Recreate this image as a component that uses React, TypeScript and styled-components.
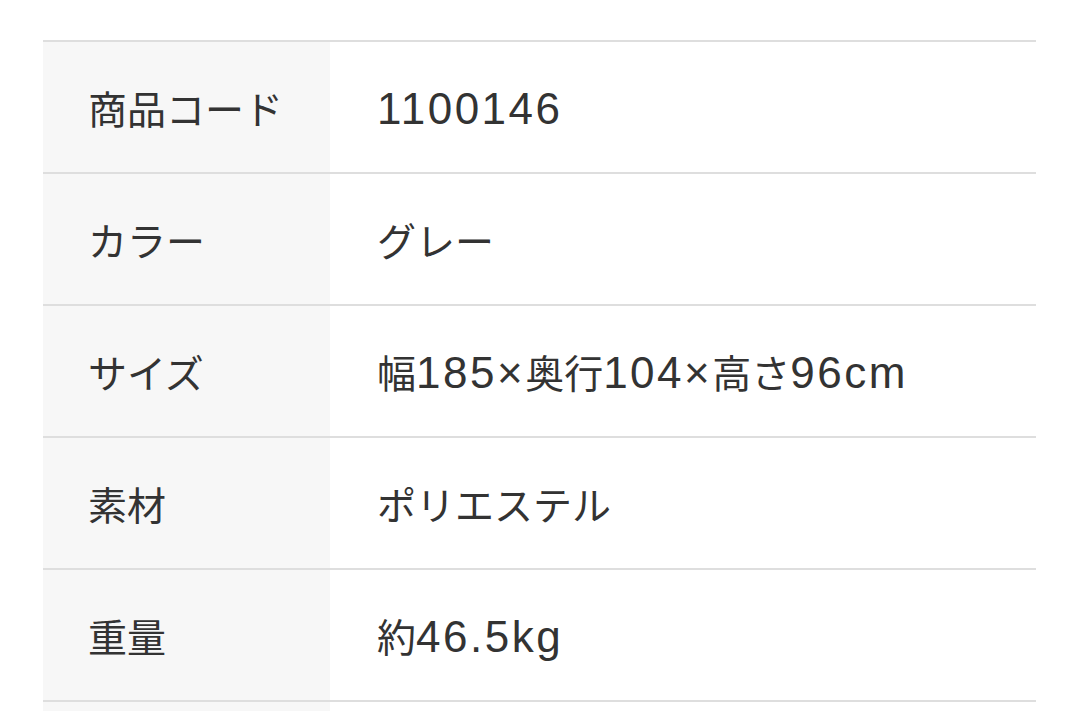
import React from "react";
import styled, { createGlobalStyle } from "styled-components";

const Global = createGlobalStyle`
  html, body { margin: 0; padding: 0; background: #ffffff; }
  body { font-family: "Noto Sans CJK JP", "Noto Sans", sans-serif; }
`;

const Page = styled.div`
  padding: 40px 44px 0 43px;
  height: 711px;
  box-sizing: border-box;
  overflow: hidden;
`;

const Table = styled.div`
  display: flex;
  flex-direction: column;
  border-top: 2px solid #dedede;
`;

const Row = styled.div`
  display: grid;
  grid-template-columns: 287px 1fr;
  height: 130px;
  border-bottom: 2px solid #dedede;
`;

const Label = styled.div`
  background: #f7f7f7;
  display: flex;
  align-items: center;
  padding-left: 45px;
  font-size: 39px;
  color: #333333;
`;

const Value = styled.div`
  display: flex;
  align-items: center;
  padding-left: 47px;
  font-size: 39px;
  color: #333333;
  white-space: pre;
`;

const Latin = styled.span`
  font-family: "Liberation Sans", Arial, sans-serif;
  font-size: 44px;
  letter-spacing: 2.5px;
`;

function Mixed({ text }: { text: string }) {
  const parts = text.split(/([0-9A-Za-z.×]+)/).filter((p) => p !== "");
  return (
    <span>
      {parts.map((p, i) =>
        /^[0-9A-Za-z.×]+$/.test(p) ? <Latin key={i}>{p}</Latin> : <React.Fragment key={i}>{p}</React.Fragment>
      )}
    </span>
  );
}

const rows: [string, string][] = [
  ["商品コード", "1100146"],
  ["カラー", "グレー"],
  ["サイズ", "幅185×奥行104×高さ96cm"],
  ["素材", "ポリエステル"],
  ["重量", "約46.5kg"],
];

export default function App() {
  return (
    <>
      <Global />
      <Page>
        <Table>
          {rows.map(([k, v]) => (
            <Row key={k}>
              <Label>{k}</Label>
              <Value>
                <Mixed text={v} />
              </Value>
            </Row>
          ))}
          <Row>
            <Label />
            <Value />
          </Row>
        </Table>
      </Page>
    </>
  );
}
